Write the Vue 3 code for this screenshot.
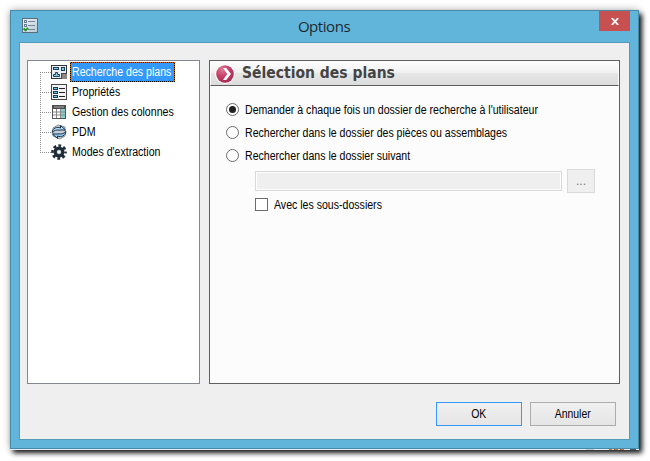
<script setup>
import { ref } from 'vue'

const selected = ref('plans')
const mode = ref('ask')
const subfolders = ref(false)

const tree = [
  { id: 'plans', label: 'Recherche des plans' },
  { id: 'props', label: 'Propriétés' },
  { id: 'cols', label: 'Gestion des colonnes' },
  { id: 'pdm', label: 'PDM' },
  { id: 'modes', label: "Modes d'extraction" },
]

const modes = [
  { id: 'ask', label: "Demander à chaque fois un dossier de recherche à l'utilisateur" },
  { id: 'parts', label: 'Rechercher dans le dossier des pièces ou assemblages' },
  { id: 'custom', label: 'Rechercher dans le dossier suivant' },
]
</script>

<template>
  <div class="stage">
    <section class="window">
      <header class="titlebar">
        <svg class="app-icon" width="16" height="16" viewBox="0 0 16 16">
          <defs>
            <linearGradient id="sheet" x1="0" y1="0" x2="1" y2="1">
              <stop offset="0" stop-color="#f4f7fa" />
              <stop offset="1" stop-color="#b9c6d4" />
            </linearGradient>
          </defs>
          <rect x=".5" y=".5" width="15" height="14" fill="url(#sheet)" stroke="#5d6c7c" />
          <rect x="2.5" y="2.5" width="2" height="2" fill="#fff" stroke="#65809b" />
          <rect x="2.5" y="6.5" width="2" height="2" fill="#fff" stroke="#65809b" />
          <path d="M6 3.5h7M6 7.5h7M6 11.5h7" stroke="#71869a" />
          <path d="M1.6 10.5l2 2L6 9.8" fill="none" stroke="#159a22" stroke-width="1.8" />
        </svg>
        <h1 class="caption">Options</h1>
        <button class="close" aria-label="Fermer">
          <svg width="8" height="7" viewBox="0 0 8 7"><path d="M.8 0l6.4 7M7.2 0L.8 7" stroke="#fff" stroke-width="1.8" /></svg>
        </button>
      </header>

      <main class="client">
        <div class="panels">
          <nav class="tree">
            <div
              v-for="item in tree"
              :key="item.id"
              class="node"
              :class="[item.id, { selected: selected === item.id }]"
              @click="selected = item.id"
            >
              <span class="branch"></span>
              <svg class="node-icon" width="16" height="16" viewBox="0 0 16 16">
                <g v-if="item.id === 'plans'">
                  <rect x=".5" y="1.5" width="15" height="13" fill="#e9eff2" stroke="#30363a" />
                  <rect x="2.5" y="3.5" width="5" height="2" fill="#8fcbe8" stroke="#183f58" />
                  <rect x="10.5" y="3.5" width="3" height="3" fill="#8fcbe8" stroke="#183f58" />
                  <path d="M4.5 8.500h2v2h2v2h-6v-2h2z" fill="#8fcbe8" stroke="#183f58" />
                  <path d="M10 9h6v6h-6z" fill="#4d4644" />
                  <path d="M11 10h5v5h-5z" fill="#8f8683" />
                </g>
                <g v-else-if="item.id === 'props'">
                  <rect x=".5" y=".5" width="15" height="15" fill="#f3f3f3" stroke="#444" />
                  <g fill="#75bddf" stroke="#173f59">
                    <rect x="2.500" y="3.500" width="4" height="2" />
                    <rect x="2.500" y="7.500" width="4" height="2" />
                    <rect x="2.500" y="11.500" width="4" height="2" />
                  </g>
                  <path d="M8 4.500h6M8 8.500h6M8 12.500h6" stroke="#222" />
                </g>
                <g v-else-if="item.id === 'cols'">
                  <rect x="1.500" y="1.500" width="13" height="13" fill="#fff" stroke="#565656" />
                  <rect x="1" y="1" width="14" height="4" fill="#4d4d4d" />
                  <path d="M3 3h10" stroke="#aaa" />
                  <rect x="10" y="5" width="4" height="9" fill="#83d3cf" />
                  <path d="M2 8h12M2 11h12M5.500 5v9M9.500 5v9" stroke="#868686" />
                </g>
                <g v-else-if="item.id === 'pdm'">
                  <path d="M2 4l5-3 7 2v9l-5 3-7-3z" fill="#c9cdd0" stroke="#8a9094" />
                  <path d="M1 8.500C1.500 4 6 2.500 9.500 4V1.500L14.500 6H8.500V6.200C5.500 5.500 3 6.500 1 8.500z" fill="#b5dcf8" stroke="#14324c" />
                  <path d="M15 7.500C14.500 12 10 13.500 6.500 12v2.500L1.500 10h6V9.800C10.500 10.500 13 9.500 15 7.500z" fill="#9ccdf2" stroke="#14324c" />
                </g>
                <g v-else>
                  <circle cx="8" cy="8" r="6.500" fill="none" stroke="#1d2c36" stroke-width="2.600" stroke-dasharray="2.850 2.255" stroke-dashoffset="1.425" />
                  <circle cx="8" cy="8" r="3.900" fill="#a9b8c0" stroke="#1d2c36" stroke-width="3.200" />
                  <circle cx="8" cy="8" r="1.600" fill="#fff" />
                </g>
              </svg>
              <span class="node-label"><span class="ui-text">{{ item.label }}</span></span>
            </div>
          </nav>

          <section class="page">
            <div class="page-head">
              <svg class="page-icon" width="20" height="20" viewBox="0 0 20 20">
                <defs>
                  <radialGradient id="ball" cx=".35" cy=".25" r=".8">
                    <stop offset="0" stop-color="#df7a98" />
                    <stop offset=".5" stop-color="#c43f69" />
                    <stop offset="1" stop-color="#a62850" />
                  </radialGradient>
                </defs>
                <circle cx="10" cy="10" r="9.800" fill="#fff" />
                <circle cx="10" cy="10" r="8.800" fill="url(#ball)" />
                <path d="M8 4h3.200l4.800 6-4.800 6H8L12.200 10z" fill="#fff" />
              </svg>
              <h2 class="page-title">Sélection des plans</h2>
            </div>

            <div class="form">
              <div v-for="m in modes" :key="m.id" class="option" @click="mode = m.id">
                <span class="radio" :class="{ on: mode === m.id }"></span>
                <span class="ui-text">{{ m.label }}</span>
              </div>
              <div class="folder">
                <span class="path"></span>
                <button class="browse">...</button>
              </div>
              <div class="check" @click="subfolders = !subfolders">
                <span class="box"></span>
                <span class="ui-text">Avec les sous-dossiers</span>
              </div>
            </div>
          </section>
        </div>

        <footer class="actions">
          <button class="btn primary"><span class="btn-text">OK</span></button>
          <button class="btn"><span class="btn-text">Annuler</span></button>
        </footer>
      </main>
    </section>
    <div class="backdrop-edge"></div>
  </div>
</template>

<style>
body { background: #fff; overflow: hidden; }
</style>

<style scoped>
* { box-sizing: border-box; }
.stage {
  width: 650px;
  height: 461px;
  padding: 10px;
  font: 12px/14px "Liberation Sans", Arial, sans-serif;
  color: #000;
  white-space: nowrap;
}
button { font: inherit; color: inherit; padding: 0; margin: 0; border-radius: 0; }
.ui-text { transform: scaleX(.881); transform-origin: 0 50%; }
.btn-text { display: inline-block; transform: scaleX(.87); }
.window {
  width: 629px;
  height: 439px;
  padding: 0 8px 8px;
  border: 1px solid #4889a8;
  background: #62b5da;
  box-shadow: 0 1px 0 #e4f0f5, 3px 4px 5px 0 rgba(0, 0, 0, .9), 0 0 8px rgba(0, 0, 0, .3);
}
/* sliver of the desktop showing under the window frame */
.backdrop-edge {
  position: relative;
  width: 629px;
  height: 1px;
  background:
    repeating-linear-gradient(to right, #c8763c 0 3px, #f0dcc4 3px 5px, #8a5a48 5px 6px) 599px 0 / 16px 1px no-repeat,
    linear-gradient(#3a5a6c, #3a5a6c) 620px 0 / 6px 1px no-repeat,
    linear-gradient(#b9cdd6, #b9cdd6) 576px 0 / 8px 1px no-repeat;
}
.titlebar { display: flex; align-items: flex-start; height: 31px; padding-left: 3px; }
.app-icon { margin-top: 7px; }
.caption {
  flex: 1;
  margin: 5px 0 0;
  padding-left: 11px;
  text-align: center;
  font: 400 15px/20px "Open Sans", "Noto Sans", sans-serif;
  letter-spacing: -.45px;
  color: #1c2a31;
}
.close {
  display: flex;
  align-items: center;
  justify-content: center;
  width: 31px;
  height: 20px;
  border: 0;
  background: #c75050;
}
.client { width: 611px; height: 398px; padding: 17px 9px 0 7px; border: 1px solid #539bbb; background: #efefef; }
.panels { display: flex; gap: 9px; height: 324px; }
.tree { width: 173px; padding: 1px 0 0 12px; border: 1px solid #828790; background: #fff; }
.node { display: flex; align-items: center; height: 20px; }
.branch {
  align-self: stretch;
  width: 11px;
  background:
    repeating-linear-gradient(to bottom, #8c8c8c 0 1px, transparent 1px 2px) 0 0 / 1px 100% no-repeat,
    repeating-linear-gradient(to right, #8c8c8c 0 1px, transparent 1px 2px) 0 10px / 11px 1px no-repeat;
}
.node.plans .branch {
  background:
    repeating-linear-gradient(to bottom, #8c8c8c 0 1px, transparent 1px 2px) 0 10px / 1px 10px no-repeat,
    repeating-linear-gradient(to right, #8c8c8c 0 1px, transparent 1px 2px) 0 10px / 11px 1px no-repeat;
}
.node.modes .branch {
  background:
    repeating-linear-gradient(to bottom, #8c8c8c 0 1px, transparent 1px 2px) 0 0 / 1px 11px no-repeat,
    repeating-linear-gradient(to right, #8c8c8c 0 1px, transparent 1px 2px) 0 10px / 11px 1px no-repeat;
}
.node-icon { flex: none; }
.node-label { display: flex; align-items: center; height: 20px; margin-left: 3px; padding: 0 1px; border: 1px solid transparent; }
.selected .node-label {
  width: 105px;
  color: #fff;
  border: 0;
  padding: 0 2px;
  background:
    repeating-linear-gradient(to right, #cc6600 0 1px, #000 1px 2px) 0 0 / 100% 1px no-repeat,
    repeating-linear-gradient(to right, #000 0 1px, #cc6600 1px 2px) 0 100% / 100% 1px no-repeat,
    repeating-linear-gradient(to bottom, #cc6600 0 1px, #000 1px 2px) 0 0 / 1px 100% no-repeat,
    repeating-linear-gradient(to bottom, #cc6600 0 1px, #000 1px 2px) 100% 0 / 1px 100% no-repeat,
    #3399ff;
}
.page { width: 411px; border: 1px solid #5f5f5f; background: #fcfcfc; }
.page-head {
  display: flex;
  align-items: center;
  height: 25px;
  padding-left: 4px;
  border: 1px solid #fcfcfc;
  border-bottom: 1px solid #5f5f5f;
  background: linear-gradient(#fdfdfd, #f0f0f0 48%, #e6e6e6 50%, #dcdcdc);
}
.page-title {
  margin: 0 0 2px 7px;
  font: 700 15px/20px "DejaVu Sans", Verdana, sans-serif;
  transform: scaleX(.93);
  transform-origin: 0 50%;
  color: #444;
}
.form { padding: 12px 0 0 16px; }
.option { display: flex; align-items: center; gap: 6px; height: 23px; }
.radio {
  display: flex;
  align-items: center;
  justify-content: center;
  width: 13px;
  height: 13px;
  border: 1px solid #6b6b6b;
  border-radius: 50%;
  background: #fff;
}
.radio.on::after { content: ""; width: 7px; height: 7px; border-radius: 50%; background: #212121; }
.folder { display: flex; align-items: center; gap: 5px; height: 24px; margin: 2px 0 0 29px; }
.path { width: 307px; height: 20px; border: 1px solid #d9d9d9; background: #efefef; box-shadow: inset 0 0 0 1px #fff; }
.browse { width: 28px; height: 24px; border: 1px solid #d9d9d9; background: #efefef; color: #777; }
.check { display: flex; align-items: center; gap: 6px; height: 13px; margin: 5px 0 0 29px; }
.box { width: 13px; height: 13px; border: 1px solid #6b6b6b; background: #fff; }
.actions { display: flex; justify-content: flex-end; gap: 8px; margin-top: 18px; padding-right: 4px; }
.btn { width: 86px; height: 24px; border: 1px solid #acacac; background: linear-gradient(#f0f0f0, #e5e5e5); }
.primary { border-color: #3399ff; }
</style>
